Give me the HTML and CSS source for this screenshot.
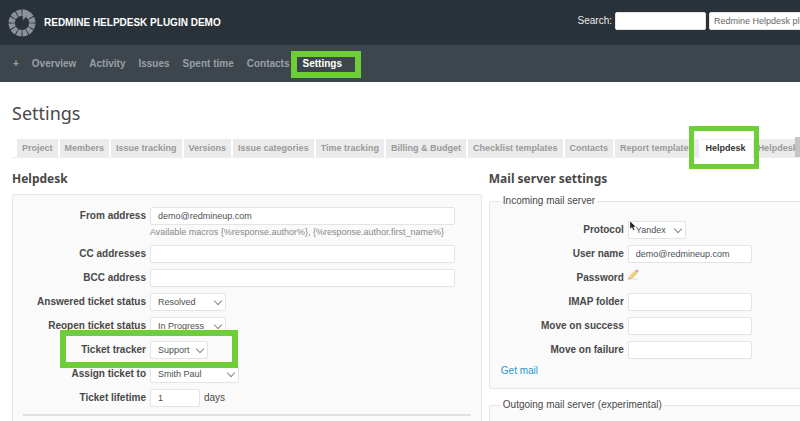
FILE: index.html
```html
<!DOCTYPE html>
<html lang="en">
<head>
    <meta charset="UTF-8">
    <meta name="viewport" content="width=device-width, initial-scale=1.0">
    <title>Settings - Redmine Helpdesk plugin demo</title>
    <link rel="stylesheet" href="styles.css">
</head>
<body>

    <header class="header">
        <svg class="logo" viewBox="0 0 28 28" aria-hidden="true">
            <circle cx="14" cy="14" r="10.3" pathLength="120" stroke-dasharray="8.4 1.6" stroke-dashoffset="-0.8" fill="none" stroke="#8b9099" stroke-width="6.4"/>
            <path d="M14.8 0.3 Q19 0.6 22 3.2 L14.8 11.5 Z" fill="#8b9099"/>
        </svg>
        <h1>REDMINE HELPDESK PLUGIN DEMO</h1>
        <form class="search">
            <label for="search">Search:</label>
            <input type="text" id="search">
            <select id="project" aria-label="Project">
                <option>Redmine Helpdesk plugin demo</option>
            </select>
        </form>
    </header>

    <nav class="main-menu">
        <a href="#">+</a>
        <a href="#">Overview</a>
        <a href="#">Activity</a>
        <a href="#">Issues</a>
        <a href="#">Spent time</a>
        <a href="#">Contacts</a>
        <a href="#" class="selected">Settings</a>
    </nav>

    <main class="content">
        <h2>Settings</h2>

        <div class="tabs">
            <a href="#">Project</a>
            <a href="#">Members</a>
            <a href="#">Issue tracking</a>
            <a href="#">Versions</a>
            <a href="#">Issue categories</a>
            <a href="#">Time tracking</a>
            <a href="#">Billing &amp; Budget</a>
            <a href="#">Checklist templates</a>
            <a href="#">Contacts</a>
            <a href="#">Report templates</a>
            <a href="#" class="selected">Helpdesk</a>
            <a href="#">Helpdesk</a>
            <button type="button" class="tab-scroll" aria-label="Scroll tabs"></button>
        </div>

        <div class="columns">
            <!-- Helpdesk -->
            <section>
                <h3>Helpdesk</h3>
                <div class="box">
                    <div class="row">
                        <label for="from">From address</label>
                        <input type="text" id="from" class="wide" value="demo@redmineup.com">
                    </div>
                    <p class="hint">Available macros {%response.author%}, {%response.author.first_name%}</p>
                    <div class="row">
                        <label for="cc">CC addresses</label>
                        <input type="text" id="cc" class="wide">
                    </div>
                    <div class="row">
                        <label for="bcc">BCC address</label>
                        <input type="text" id="bcc" class="wide">
                    </div>
                    <div class="row">
                        <label for="answered">Answered ticket status</label>
                        <span class="select status"><select id="answered"><option>Resolved</option></select></span>
                    </div>
                    <div class="row">
                        <label for="reopen">Reopen ticket status</label>
                        <span class="select status"><select id="reopen"><option>In Progress</option></select></span>
                    </div>
                    <div class="row marked">
                        <label for="tracker">Ticket tracker</label>
                        <span class="select short"><select id="tracker"><option>Support</option></select></span>
                    </div>
                    <div class="row">
                        <label for="assign">Assign ticket to</label>
                        <span class="select person"><select id="assign"><option>Smith Paul</option></select></span>
                    </div>
                    <div class="row">
                        <label for="lifetime">Ticket lifetime</label>
                        <input type="text" id="lifetime" class="days" value="1">
                        <span>days</span>
                    </div>
                    <hr>
                </div>
            </section>

            <!-- Mail server settings -->
            <section>
                <h3>Mail server settings</h3>
                <fieldset>
                    <legend>Incoming mail server</legend>
                    <div class="row first">
                        <label for="protocol">Protocol</label>
                        <span class="select short"><select id="protocol"><option>Yandex</option></select></span>
                        <svg class="cursor" viewBox="0 0 8 10" aria-hidden="true">
                            <path d="M1 0 V8 L3 6.4 L4.2 9.4 L5.7 8.8 L4.5 6 H7 Z" fill="#222" stroke="#fff" stroke-width="0.4"/>
                        </svg>
                    </div>
                    <div class="row">
                        <label for="user">User name</label>
                        <input type="text" id="user" value="demo@redmineup.com">
                    </div>
                    <div class="row">
                        <span class="label">Password</span>
                        <a href="#" class="edit" aria-label="Change password">
                            <svg viewBox="0 0 11 11" aria-hidden="true">
                                <ellipse cx="6" cy="10" rx="4.5" ry="0.8" fill="#e4e4e4"/>
                                <path d="M0.6 10.2 L1.6 7.2 L6.8 2 L9 4.2 L3.6 9.4 Z" fill="#f3cf6b" stroke="#cfa650" stroke-width="0.5"/>
                                <path d="M2.2 7.8 L7.6 2.6" stroke="#fbe9a6" stroke-width="0.8"/>
                                <path d="M0.6 10.2 L1.4 7.6 L3.2 9.3 Z" fill="#e9d6b8"/>
                                <path d="M0.6 10.2 L1 9 L1.8 9.8 Z" fill="#555"/>
                                <path d="M6.8 2 L7.6 1.2 L9.8 3.4 L9 4.2 Z" fill="#c9ccd4"/>
                                <path d="M7.6 1.2 Q8.6 0.1 9.8 1.1 Q11 2.3 9.8 3.4 Z" fill="#ea8088"/>
                            </svg>
                        </a>
                    </div>
                    <div class="row">
                        <label for="imap">IMAP folder</label>
                        <input type="text" id="imap">
                    </div>
                    <div class="row">
                        <label for="success">Move on success</label>
                        <input type="text" id="success">
                    </div>
                    <div class="row">
                        <label for="failure">Move on failure</label>
                        <input type="text" id="failure">
                    </div>
                    <a href="#" class="get-mail">Get mail</a>
                </fieldset>
                <fieldset>
                    <legend>Outgoing mail server (experimental)</legend>
                </fieldset>
            </section>
        </div>
    </main>

</body>
</html>
```
FILE: styles.css
```css
*, *::after {
    box-sizing: border-box;
}
html {
    overflow: hidden;
}
body {
    margin: 0;
    font: 10px/14px "Liberation Sans", Arial, sans-serif;
    color: #484848;
    background: #fff;
}
a {
    text-decoration: none;
}
h1, h2, h3, p {
    margin: 0;
}
input, select {
    height: 18px;
    margin: 0;
    padding: 0 7px;
    border: 1px solid #e4e4e4;
    border-radius: 2px;
    background: #fff;
    color: #4a4f54;
    font: 9px "Liberation Sans", Arial, sans-serif;
    appearance: none;
}

/* header */
.header {
    display: flex;
    align-items: center;
    height: 45px;
    padding-left: 8px;
    background: #283238;
    overflow: hidden;
}
.logo {
    width: 28px;
    height: 28px;
    margin-right: 8px;
}
h1 {
    color: #fff;
    font-size: 10px;
    line-height: 14px;
}
.search {
    display: flex;
    align-items: center;
    gap: 3px;
    margin-left: auto;
    margin-right: -40px;
    margin-bottom: 3px;
    color: #e8eaeb;
}
.search input {
    width: 91px;
}
.search select {
    width: 131px;
    padding: 0 4px;
    color: #666;
}

/* main menu */
.main-menu {
    display: flex;
    align-items: center;
    gap: 13px;
    height: 37px;
    padding-left: 13px;
    background: #3e464d;
}
.main-menu a {
    color: #9a9fa6;
    font-weight: bold;
}
.main-menu .selected {
    position: relative;
    color: #fff;
}
.main-menu .selected::after {
    content: "";
    position: absolute;
    inset: -6px -19px -7px -12px;
    border: 6px solid #6dce38;
}

/* content */
.content {
    padding: 19px 0 0 12px;
}
h2 {
    font: 18px/24px "Noto Sans", sans-serif;
}
h3 {
    margin-bottom: 7px;
    font: bold 12px/16px "Noto Sans", sans-serif;
}
.tabs {
    position: relative;
    display: flex;
    gap: 2px;
    margin-top: 14px;
    padding-left: 5px;
    border-bottom: 1px solid #eee;
}
.tabs a {
    flex: none;
    height: 18px;
    padding: 0 5px;
    background: #ebebeb;
    color: #999;
    font-size: 9px;
    font-weight: bold;
    line-height: 18px;
}
.tabs .selected {
    position: relative;
    z-index: 1;
    margin-bottom: -1px;
    height: 19px;
    background: #fff;
    box-shadow: inset 0 1px #eee;
    color: #333;
}
.tabs .selected::after {
    content: "";
    position: absolute;
    inset: -13px -8px -11px -12px;
    border: 5px solid #6dce38;
}
.tab-scroll {
    position: absolute;
    right: 0;
    bottom: 0;
    width: 5px;
    height: 20px;
    padding: 0;
    border: 0;
    background: #c4c4c4;
}
.columns {
    display: grid;
    grid-template-columns: 3fr 2fr;
    gap: 7px;
    margin-top: 13px;
    margin-right: -2px;
}
.box, fieldset {
    border: 1px solid #e6e6e6;
    border-radius: 2px;
    background: #fafafa;
}
.box {
    padding: 12px 10px;
}

/* form rows */
.row {
    position: relative;
    display: flex;
    align-items: center;
    gap: 4px;
    height: 18px;
    margin-bottom: 6px;
}
.row label, .row .label {
    width: 123px;
    font-weight: bold;
    text-align: right;
}
.row input {
    width: 124px;
}
.row .wide {
    width: 305px;
}
.row .days {
    width: 50px;
}
.hint {
    margin: -6px 0 6px 127px;
    color: #888;
    font-size: 9px;
}
.select {
    position: relative;
}
.select select {
    display: block;
    width: 100%;
}
.select::after {
    content: "";
    position: absolute;
    top: 5px;
    right: 5px;
    width: 6px;
    height: 6px;
    border: solid #888;
    border-width: 0 1px 1px 0;
    transform: rotate(45deg);
}
.status {
    width: 76px;
}
.short {
    width: 58px;
}
.person {
    width: 89px;
}
.marked::after {
    content: "";
    position: absolute;
    z-index: 1;
    top: -11px;
    left: 37px;
    width: 178px;
    height: 38px;
    border: 6px solid #6dce38;
}
hr {
    height: 2px;
    margin: 7px 0 0;
    border: 0;
    background: #e2e2e2;
}

/* mail server */
fieldset {
    min-height: 60px;
    margin: 0 0 9px;
    padding: 0 11px 10px;
}
legend {
    padding: 0 2px;
}
.first {
    margin-top: 13px;
}
.cursor {
    position: absolute;
    top: 0;
    left: 128px;
    width: 8px;
    height: 10px;
}
.edit {
    align-self: flex-start;
}
.edit svg {
    display: block;
    width: 11px;
    height: 11px;
}
.get-mail {
    display: block;
    width: max-content;
    margin-top: -1px;
    color: #2996cc;
}
```
